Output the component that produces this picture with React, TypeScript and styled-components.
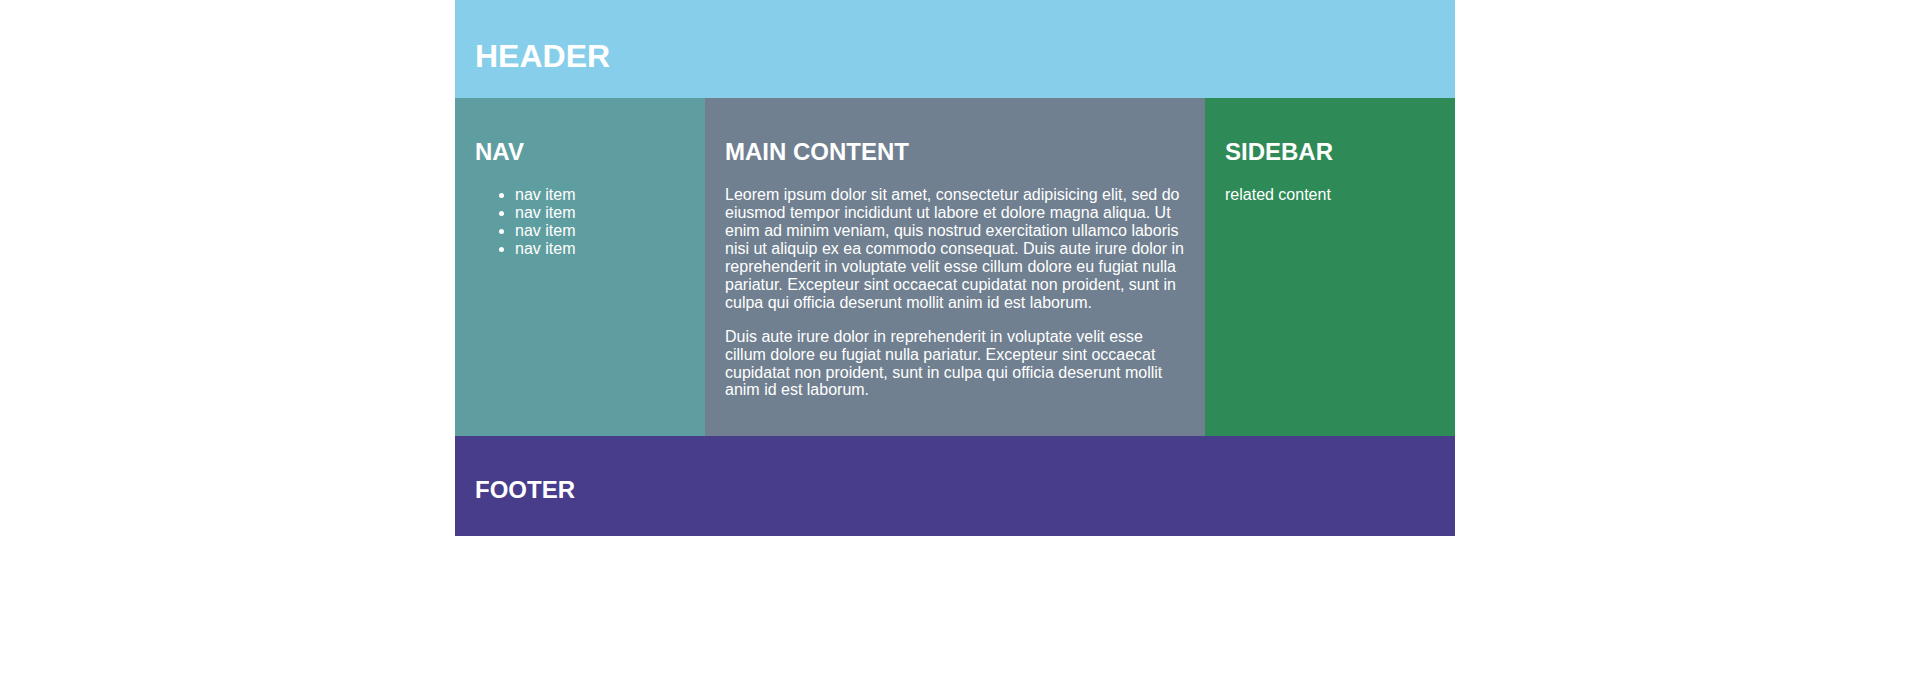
import styled, { createGlobalStyle } from "styled-components";

const GlobalStyle = createGlobalStyle`
  html, body {
    margin: 0;
    padding: 0;
    background: #ffffff;
  }
  body {
    font-family: "Liberation Sans", Arial, sans-serif;
    font-size: 16px;
    line-height: 1.12;
    color: #ffffff;
  }
`;

const Page = styled.div`
  padding-right: 5px;
`;

const Layout = styled.div`
  width: 1000px;
  margin: 0 auto;
  display: grid;
  grid-template-columns: 250px 1fr 250px;
  grid-template-rows: 98px 338px 100px;
  grid-template-areas:
    "header header header"
    "nav main sidebar"
    "footer footer footer";
`;

const Header = styled.header`
  grid-area: header;
  background: #87ceeb;
  padding: 39px 20px 0;
  box-sizing: border-box;

  h1 {
    margin: 0;
    font-size: 32px;
    line-height: 1.1;
    font-weight: 700;
  }
`;

interface ColumnProps {
  $bg: string;
  $area: string;
}

const Column = styled.section<ColumnProps>`
  grid-area: ${({ $area }) => $area};
  background: ${({ $bg }) => $bg};
  padding: 41px 20px 20px;
  box-sizing: border-box;

  h2 {
    margin: 0 0 21px;
    font-size: 24px;
    line-height: 1.1;
    font-weight: 700;
  }

  p {
    margin: 0 0 16px;
  }
`;

const NavList = styled.ul`
  margin: 0;
  padding-left: 40px;
  list-style: disc;
`;

const Footer = styled.footer`
  grid-area: footer;
  background: #483d8b;
  padding: 41px 20px 0;
  box-sizing: border-box;

  h2 {
    margin: 0;
    font-size: 24px;
    line-height: 1.1;
    font-weight: 700;
  }
`;

const navItems = ["nav item", "nav item", "nav item", "nav item"];

export default function App() {
  return (
    <Page>
      <GlobalStyle />
      <Layout>
        <Header>
          <h1>HEADER</h1>
        </Header>
        <Column $area="nav" $bg="#5f9ea0">
          <h2>NAV</h2>
          <NavList>
            {navItems.map((item, i) => (
              <li key={i}>{item}</li>
            ))}
          </NavList>
        </Column>
        <Column $area="main" $bg="#708090">
          <h2>MAIN CONTENT</h2>
          <p>
            Leorem ipsum dolor sit amet, consectetur adipisicing elit, sed do
            eiusmod tempor incididunt ut labore et dolore magna aliqua. Ut enim
            ad minim veniam, quis nostrud exercitation ullamco laboris nisi ut
            aliquip ex ea commodo consequat. Duis aute irure dolor in
            reprehenderit in voluptate velit esse cillum dolore eu fugiat nulla
            pariatur. Excepteur sint occaecat cupidatat non proident, sunt in
            culpa qui officia deserunt mollit anim id est laborum.
          </p>
          <p>
            Duis aute irure dolor in reprehenderit in voluptate velit esse
            cillum dolore eu fugiat nulla pariatur. Excepteur sint occaecat
            cupidatat non proident, sunt in culpa qui officia deserunt mollit
            anim id est laborum.
          </p>
        </Column>
        <Column $area="sidebar" $bg="#2e8b57">
          <h2>SIDEBAR</h2>
          <p>related content</p>
        </Column>
        <Footer>
          <h2>FOOTER</h2>
        </Footer>
      </Layout>
    </Page>
  );
}
